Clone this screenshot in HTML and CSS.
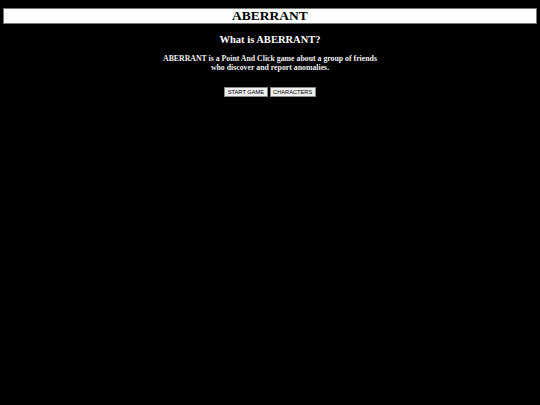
FILE: index.html
```html
<!DOCTYPE html>
<html>
<head>
<meta charset="utf-8">
<link rel="stylesheet" href="styles.css">
</head>
<body>
<header class="banner"><h1 class="title">ABERRANT</h1></header>
<main class="content">
<h2 class="subtitle">What is ABERRANT?</h2>
<p class="desc">ABERRANT is a Point And Click game about a group of friends<br>who discover and report anomalies.</p>
<div class="actions">
<button class="btn">START GAME</button>
<button class="btn">CHARACTERS</button>
</div>
</main>
</body>
</html>
```
FILE: styles.css
```css
html, body { background: #000; }
body { margin: 0; padding: 8px 3px; font-family: "Liberation Serif", serif; color: #fff; }
.banner { background: #fff; border: 1px solid #777; height: 14px; display: flex; align-items: center; justify-content: center; }
.title { margin: 0; font-size: 13.5px; line-height: 14px; color: #000; font-weight: bold; }
.content { text-align: center; }
.subtitle { margin: 9px 0 0; font-size: 10.5px; line-height: 14px; font-weight: bold; }
.desc { margin: 7px 0 0; font-size: 7.8px; line-height: 9px; font-weight: bold; color: #eee; }
.actions { margin-top: 15px; display: flex; justify-content: center; gap: 2px; }
.btn { font-family: "Liberation Sans", sans-serif; font-size: 5.7px; padding: 1px 2.5px; background: #f0f0f0; color: #000; border: 1px solid #888; border-radius: 0; line-height: 6px; }
```
